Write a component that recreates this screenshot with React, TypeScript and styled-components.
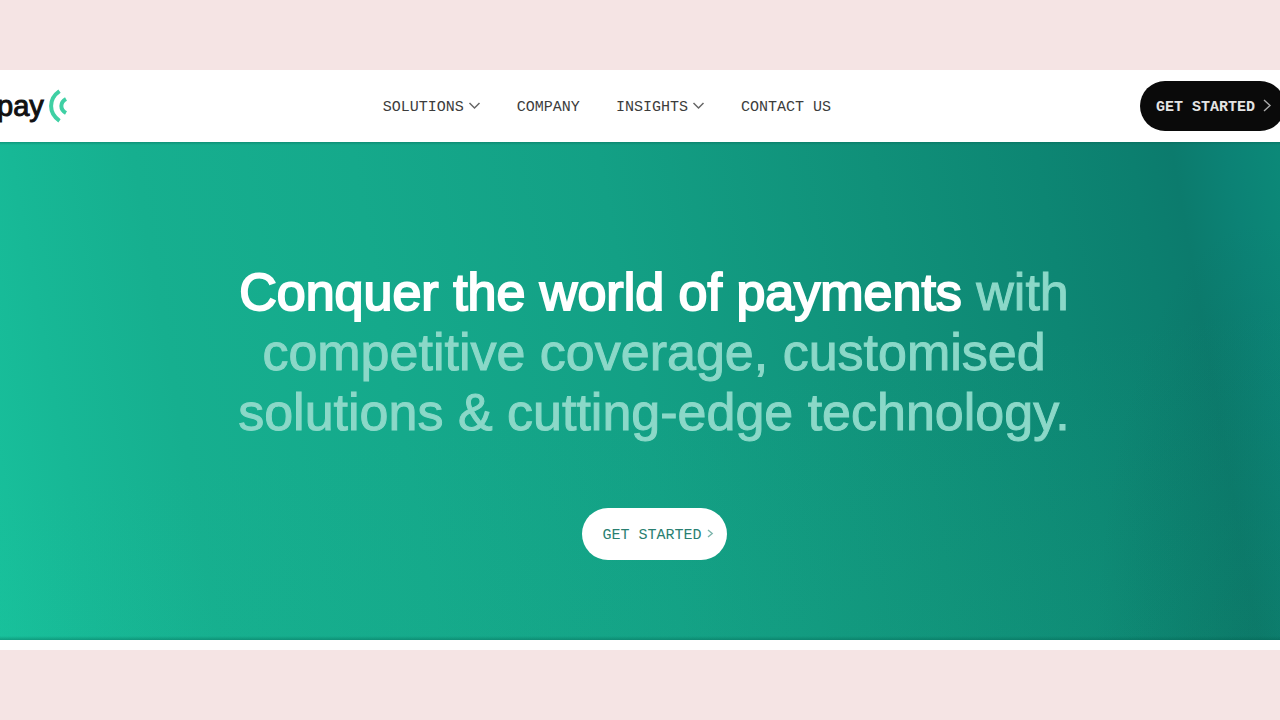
import React from "react";
import styled, { createGlobalStyle, css } from "styled-components";

const sans = `"Liberation Sans", Arial, sans-serif`;
const mono = `"Liberation Mono", "Courier New", monospace`;

const GlobalStyle = createGlobalStyle`
  *, *::before, *::after { box-sizing: border-box; }
  body { margin: 0; background: #f5e4e4; font-family: ${sans}; }
`;

const Page = styled.div`
  padding: 70px 0;
  overflow-x: hidden;
`;

const Site = styled.div`
  background: #fff;
  padding-bottom: 10px;
`;

const Header = styled.header`
  display: flex;
  align-items: center;
  justify-content: space-between;
  height: 72px;
  margin: 0 -5px 0 -3px;
`;

const Logo = styled.a`
  display: flex;
  align-items: center;
  gap: 4px;
  color: #111;
  font-size: 29px;
  line-height: 32px;
  text-decoration: none;
  -webkit-text-stroke: 1px currentColor;
`;

const Nav = styled.nav`
  display: flex;
  gap: 36px;
  padding: 4px 0 0 6px;
`;

const navItem = css`
  display: flex;
  align-items: center;
  gap: 4px;
  padding: 0;
  border: 0;
  background: none;
  color: #3c3c3c;
  font-family: ${mono};
  font-size: 15px;
  line-height: 20px;
  text-decoration: none;
  white-space: nowrap;
  cursor: pointer;
`;

const NavLink = styled.a`${navItem}`;
const NavButton = styled.button`${navItem}`;

const Pill = styled.button<{ $dark?: boolean }>`
  display: flex;
  align-items: center;
  gap: 4px;
  width: 145px;
  height: ${(p) => (p.$dark ? 50 : 52)}px;
  padding: 4px 0 0 ${(p) => (p.$dark ? 16 : 21)}px;
  border: 0;
  border-radius: 26px;
  background: ${(p) => (p.$dark ? "#0a0a0a" : "#fff")};
  color: ${(p) => (p.$dark ? "#e4e4e4" : "#2a7f71")};
  font-family: ${mono};
  font-size: 15px;
  font-weight: ${(p) => (p.$dark ? 700 : 400)};
  line-height: 20px;
  white-space: nowrap;
  cursor: pointer;
`;

const Hero = styled.section`
  display: flex;
  flex-direction: column;
  align-items: center;
  gap: 66px;
  padding: 120px 0 80px 28px;
  background:
    linear-gradient(to bottom, rgba(0, 90, 75, 0.35), transparent 3px calc(100% - 4px), rgba(0, 90, 75, 0.35)),
    linear-gradient(172deg, rgba(20, 170, 130, 0), rgba(20, 170, 130, 0) 50%, rgba(30, 190, 140, 0.1)),
    radial-gradient(ellipse 160px 460px at 98% 108%, rgba(5, 85, 75, 0.25), rgba(5, 85, 75, 0)),
    linear-gradient(80deg, #18c19c 0%, #17b896 7%, #16af8f 16%, #15a98b 32%, #13a085 50%, #109079 70%, #0d8673 82%, #0c7f6f 89%, #0c7b6d 92%, #0c8275 96%, #0c8b79 101%);
`;

const Title = styled.h1`
  max-width: 880px;
  margin: 0;
  color: #8bd8c8;
  font-size: 52px;
  font-weight: 400;
  line-height: 60px;
  text-align: center;
  -webkit-text-stroke: 1px currentColor;
`;

const Strong = styled.span`
  color: #fff;
  -webkit-text-stroke: 2px currentColor;
`;

const ChevronDown = () => (
  <svg width="13" height="14" viewBox="0 0 13 14" fill="none" stroke="#666" strokeWidth="1.5" aria-hidden="true">
    <path d="M1.5 2 6.5 7 11.5 2" />
  </svg>
);

const ChevronRight = ({ small }: { small?: boolean }) => (
  <svg width={small ? 8 : 16} height="20" viewBox={small ? "0 0 8 20" : "0 0 16 20"} fill="none" stroke={small ? "#7db5ac" : "#aaa"} strokeWidth="1.4" aria-hidden="true">
    <path d={small ? "M2 4 6.2 7.5 2 11" : "M5 2 11 7.5 5 13"} />
  </svg>
);

const Waves = () => (
  <svg width="20" height="34" viewBox="0 0 20 34" fill="none" stroke="#3fd0a4" aria-hidden="true">
    <path d="M11.5 2.2C.3 10 .3 24 11.5 31.8" strokeWidth="4" />
    <path d="M18 10C11.8 13.5 11.8 20.5 18 24" strokeWidth="4" />
  </svg>
);

export default function App() {
  return (
    <>
      <GlobalStyle />
      <Page>
        <Site>
          <Header>
            <Logo href="#">
              pay
              <Waves />
            </Logo>
            <Nav>
              <NavButton type="button">SOLUTIONS<ChevronDown /></NavButton>
              <NavLink href="#company">COMPANY</NavLink>
              <NavButton type="button">INSIGHTS<ChevronDown /></NavButton>
              <NavLink href="#contact">CONTACT US</NavLink>
            </Nav>
            <Pill type="button" $dark>GET STARTED<ChevronRight /></Pill>
          </Header>
          <Hero>
            <Title>
              <Strong>Conquer the world of payments</Strong> with competitive coverage, customised solutions &amp; cutting-edge technology.
            </Title>
            <Pill type="button">GET STARTED<ChevronRight small /></Pill>
          </Hero>
        </Site>
      </Page>
    </>
  );
}
